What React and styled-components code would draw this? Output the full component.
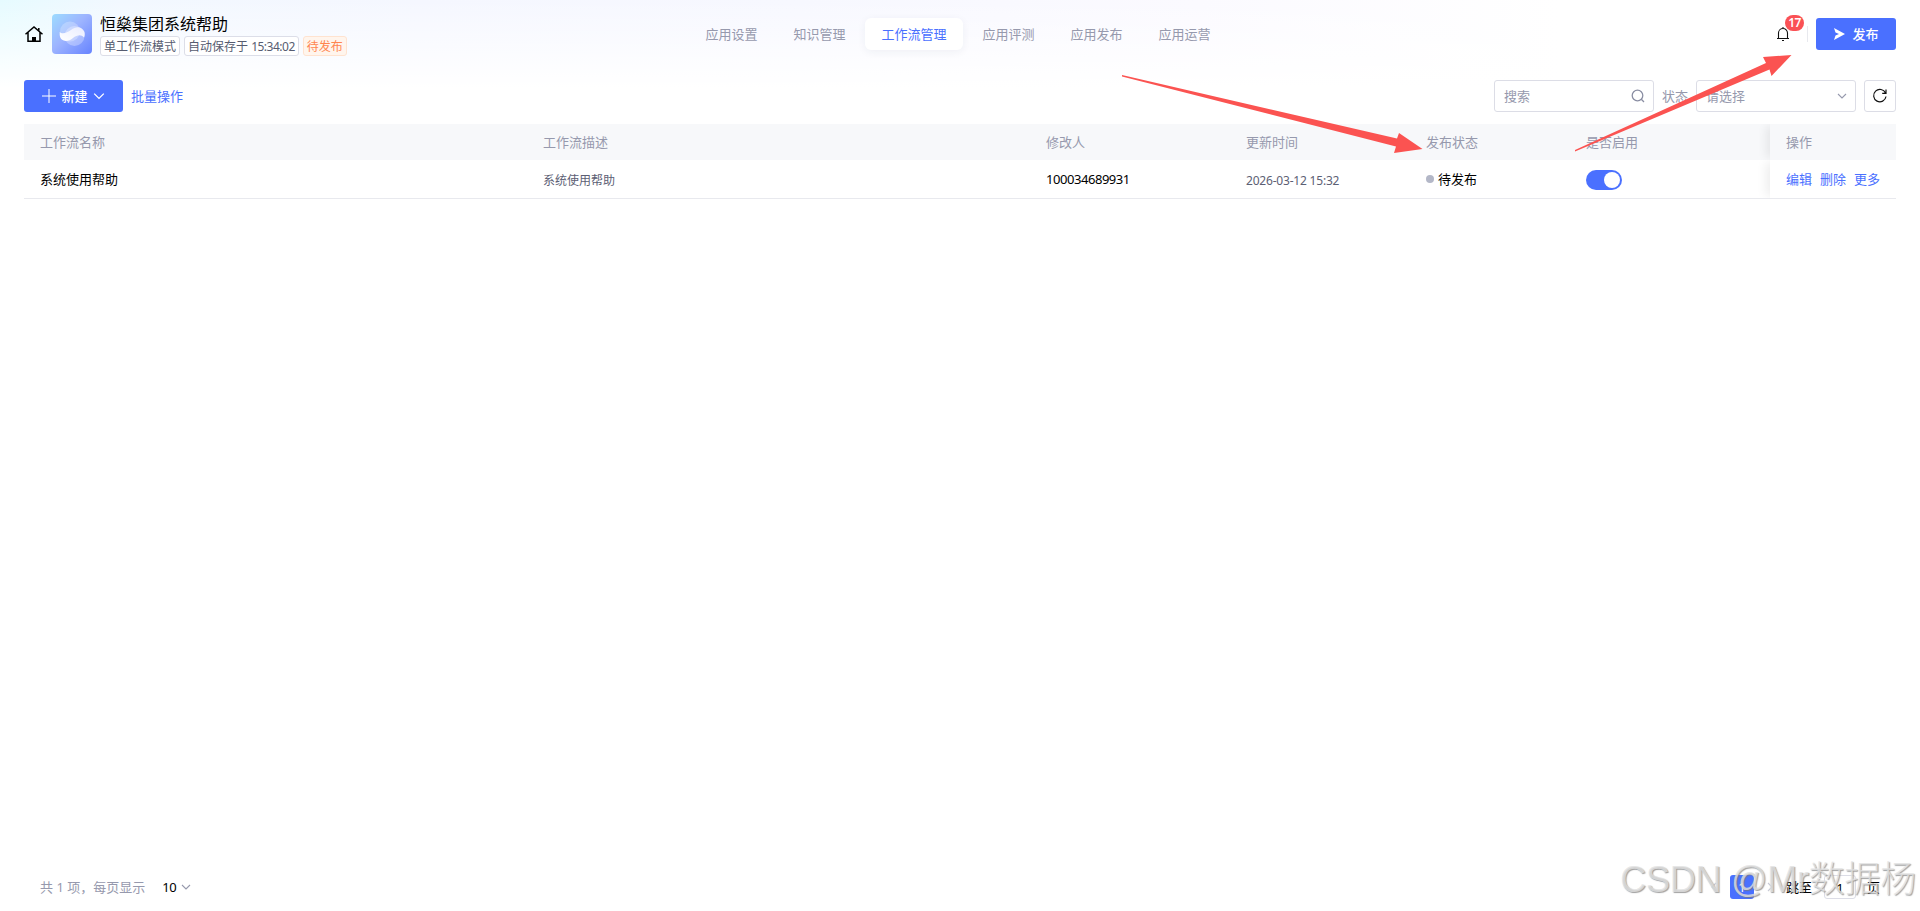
import React, {useState} from 'react';
import styled, {createGlobalStyle} from 'styled-components';

const GlobalStyle = createGlobalStyle`
  * {
    box-sizing: border-box;
  }

  body {
    margin: 0;
    overflow: hidden;
    color: #000;
    font-family: "Noto Sans", "Noto Sans CJK SC", sans-serif;
    font-size: 13px;
    line-height: 20px;
  }
`;

const Page = styled.div`
  position: relative;
  display: flex;
  flex-direction: column;
  height: 911px;
  padding: 0 24px;
  background:
    linear-gradient(180deg, rgba(255, 255, 255, 0) 0, #fff 88px),
    linear-gradient(90deg, #e6fbff 0, #f2f8ff 120px, #f5f7ff 420px, #f7f8ff 800px, #fbfaff 1200px, #fff 1560px);
`;

const Header = styled.header`
  display: flex;
  align-items: center;
  justify-content: space-between;
  height: 68px;
`;

const Side = styled.div`
  display: flex;
  flex: 1;
  align-items: center;
  justify-content: ${props => props.end ? 'flex-end' : 'flex-start'};
`;

const HomeIcon = styled.svg`
  width: 20px;
  height: 18px;
  margin-right: 8px;
`;

const Logo = styled.svg`
  width: 40px;
  height: 40px;
`;

const AppInfo = styled.div`
  margin-left: 8px;
`;

const AppName = styled.div`
  font-size: 16px;
  line-height: 24px;
`;

const Tags = styled.div`
  display: flex;
  gap: 4px;
`;

const Tag = styled.span`
  height: 20px;
  padding: 0 3px;
  border: 1px solid ${props => props.warn ? '#ffe3d0' : '#dcdee8'};
  border-radius: 3px;
  background: ${props => props.warn ? '#fff5ed' : '#fff'};
  color: ${props => props.warn ? '#ff8550' : '#565c70'};
  font-size: 12px;
  line-height: 20px;
  white-space: nowrap;
`;

const Num = styled.span`
  letter-spacing: ${props => props.tight || '-0.45px'};
`;

const Nav = styled.nav`
  display: flex;
  gap: 4px;
  margin-right: 4px;
`;

const NavItem = styled.a`
  height: 32px;
  padding: 0 16px;
  border-radius: 6px;
  line-height: 32px;
  color: ${props => props.active ? '#4a70ff' : '#9699ad'};
  background: ${props => props.active ? '#fff' : 'transparent'};
  box-shadow: ${props => props.active ? '0 2px 8px rgba(40, 50, 90, 0.06)' : 'none'};
  cursor: pointer;
`;

const Bell = styled.div`
  position: relative;
  display: flex;
  width: 16px;
  height: 16px;
  margin-right: 16px;
`;

const Badge = styled.span`
  position: absolute;
  left: 10px;
  top: -11px;
  width: 19px;
  height: 16px;
  border-radius: 8px;
  background: #fa5155;
  color: #fff;
  font-size: 12px;
  font-weight: 600;
  line-height: 16px;
  letter-spacing: -0.5px;
  text-align: center;
`;

const Divider = styled.span`
  width: 1px;
  height: 16px;
  margin-right: 8px;
  background: #e8e9ee;
`;

const Button = styled.button`
  display: flex;
  align-items: center;
  justify-content: center;
  gap: ${props => props.gap || 6}px;
  width: ${props => props.width}px;
  height: 32px;
  padding: 0;
  border: none;
  border-radius: 3px;
  background: #4a70ff;
  color: #fff;
  font: inherit;
  font-weight: 500;
  cursor: pointer;
`;

const Toolbar = styled.div`
  display: flex;
  align-items: center;
  height: 32px;
  margin-top: 12px;
`;

const Link = styled.a`
  color: #4a70ff;
  cursor: pointer;
`;

const BatchLink = styled(Link)`
  margin-left: 8px;
`;

const Filters = styled.div`
  display: flex;
  align-items: center;
  gap: 8px;
  margin-left: auto;
  color: #9699ad;
`;

const Field = styled.div`
  display: flex;
  align-items: center;
  justify-content: ${props => props.square ? 'center' : 'space-between'};
  width: ${props => props.square ? 32 : 160}px;
  height: 32px;
  padding: ${props => props.square ? 0 : '0 8px 0 9px'};
  border: 1px solid #dcdde6;
  border-radius: 3px;
  background: #fff;
`;

const Row = styled.div`
  display: grid;
  grid-template-columns: 1fr 1fr 200px 180px 160px 200px 126px;
`;

const HeadRow = styled(Row)`
  height: 36px;
  margin-top: 12px;
  background: #f7f8fa;
  color: #9699ad;
`;

const BodyRow = styled(Row)`
  height: 39px;
  border-bottom: 1px solid #e8e9ee;
`;

const Cell = styled.div`
  display: flex;
  align-items: center;
  padding: ${props => props.muted ? '3px 16px 0' : '0 16px'};
  color: ${props => props.muted ? '#5c6074' : 'inherit'};
  font-size: ${props => props.muted ? 12 : 13}px;
`;

const FixedCell = styled(Cell)`
  gap: 8px;
  background: ${props => props.head ? '#f7f8fa' : '#fff'};
  box-shadow: -6px 0 10px -2px rgba(0, 0, 0, 0.07);
  clip-path: inset(0 0 0 -16px);
`;

const Dot = styled.span`
  width: 8px;
  height: 8px;
  margin-right: 4px;
  border-radius: 50%;
  background: #b3b7c7;
`;

const Toggle = styled.button`
  display: flex;
  align-items: center;
  justify-content: ${props => props.on ? 'flex-end' : 'flex-start'};
  width: 36px;
  height: 20px;
  margin-top: 2px;
  padding: 0 2px;
  border: none;
  border-radius: 10px;
  background: ${props => props.on ? '#4a70ff' : '#b3b7c7'};

  &::after {
    content: '';
    width: 16px;
    height: 16px;
    border-radius: 50%;
    background: #fff;
  }
`;

const Footer = styled.footer`
  display: flex;
  align-items: center;
  height: 24px;
  margin-top: auto;
  margin-bottom: 12px;
  padding: 0 16px;
`;

const Total = styled.span`
  color: #9699ad;
`;

const PageSize = styled.span`
  display: flex;
  align-items: center;
  gap: 5px;
  margin-left: 17px;
`;

const Pager = styled.div`
  display: flex;
  align-items: center;
  margin-left: auto;
`;

const PageButton = styled.span`
  width: 24px;
  height: 24px;
  margin: 0 11px;
  border-radius: 3px;
  background: #4a70ff;
  color: #fff;
  line-height: 24px;
  text-align: center;
`;

const JumpLabel = styled.span`
  margin-left: 11px;
`;

const PageInput = styled.span`
  width: 32px;
  height: 24px;
  margin: 0 11px 0 12px;
  border: 1px solid #dcdde6;
  border-radius: 3px;
  line-height: 24px;
  text-align: center;
`;

const Arrows = styled.svg`
  position: absolute;
  left: 0;
  top: 0;
  width: 1920px;
  height: 200px;
  pointer-events: none;
`;

const Watermark = styled.div`
  position: absolute;
  right: 4px;
  bottom: 7px;
  color: rgba(226, 226, 226, 0.8);
  font-family: "Liberation Sans", "Noto Sans CJK SC", sans-serif;
  font-size: 36px;
  font-weight: 300;
  line-height: 48px;
  letter-spacing: -0.25px;
  text-shadow: 1px 1px 1px rgba(120, 120, 120, 0.7);
  white-space: nowrap;
  pointer-events: none;
`;

const Chevron = ({color = '#9699ad', size = 10, side}) => (
    <svg width={size} height={size} viewBox="0 0 10 10" fill="none" stroke={color} strokeWidth="1.1">
        <path d={side === 'left' ? 'M7 1L3 5l4 4' : side === 'right' ? 'M3 1l4 4-4 4' : 'M1 3l4 4 4-4'}/>
    </svg>
);

const NAV = ['应用设置', '知识管理', '工作流管理', '应用评测', '应用发布', '应用运营'];
const COLUMNS = ['工作流名称', '工作流描述', '修改人', '更新时间', '发布状态', '是否启用'];

const App = () => {
    const [tab, setTab] = useState('工作流管理');
    const [enabled, setEnabled] = useState(true);

    return (
        <Page>
            <GlobalStyle/>
            <Header>
                <Side>
                    <HomeIcon viewBox="0 0 20 18" fill="none" stroke="#000" strokeWidth="1.5">
                        <path d="M1.5 9.3L10 2l8.5 7.3M4 7.5v8.7h12V7.5M14.8 3v3"/>
                        <path d="M8 12h4v4H8z" fill="#000" stroke="none"/>
                    </HomeIcon>
                    <Logo viewBox="0 0 40 40">
                        <defs>
                            <linearGradient id="logoBg" x1="0" y1="0" x2="1" y2="1">
                                <stop offset="0" stopColor="#9ddcff"/>
                                <stop offset="0.45" stopColor="#9db4ff"/>
                                <stop offset="1" stopColor="#6683ff"/>
                            </linearGradient>
                            <linearGradient id="logoMark" x1="0" y1="1" x2="1" y2="0">
                                <stop offset="0" stopColor="#fff"/>
                                <stop offset="1" stopColor="#e9ecff"/>
                            </linearGradient>
                        </defs>
                        <rect width="40" height="40" rx="4" fill="url(#logoBg)"/>
                        <circle cx="18" cy="17.5" r="10" fill="#fff" opacity="0.25"/>
                        <circle cx="22.5" cy="22" r="10" fill="#fff" opacity="0.3"/>
                        <path d="M7.700 18C10 20.500 15 19 19 16C24 12 30 12 32.500 18C33 20 32.800 22 32 23.500C29 20 25 21 21 24C16 28.500 8.500 28 7.700 21z" fill="url(#logoMark)"/>
                    </Logo>
                    <AppInfo>
                        <AppName>恒燊集团系统帮助</AppName>
                        <Tags>
                            <Tag>单工作流模式</Tag>
                            <Tag>自动保存于 <Num tight="-0.5px">15:34:02</Num></Tag>
                            <Tag warn="true">待发布</Tag>
                        </Tags>
                    </AppInfo>
                </Side>
                <Nav>
                    {NAV.map(name => (
                        <NavItem key={name} active={name === tab ? 'true' : undefined} onClick={() => setTab(name)}>{name}</NavItem>
                    ))}
                </Nav>
                <Side end="true">
                    <Bell>
                        <svg width="16" height="16" viewBox="0 0 16 16" fill="none" stroke="#111" strokeWidth="1.1">
                            <path d="M2 12.500h12M3.500 12.500V7a4.500 4.500 0 0 1 9 0v5.500M8 1v1.500M7 14.500h2"/>
                        </svg>
                        <Badge>17</Badge>
                    </Bell>
                    <Divider/>
                    <Button width={80} gap={7}>
                        <svg width="12" height="12" viewBox="0 0 12 12">
                            <path d="M1 0l11 6-11 6 1.500-4.500L6 6 2.500 4.500z" fill="#fff"/>
                        </svg>
                        <span>发布</span>
                    </Button>
                </Side>
            </Header>

            <Toolbar>
                <Button width={99} gap={5}>
                    <svg width="14" height="14" viewBox="0 0 14 14" stroke="#fff">
                        <path d="M7 0v14M0 7h14"/>
                    </svg>
                    <span>新建</span>
                    <Chevron color="#fff" size={12}/>
                </Button>
                <BatchLink>批量操作</BatchLink>
                <Filters>
                    <Field>
                        <span>搜索</span>
                        <svg width="14" height="14" viewBox="0 0 14 14" fill="none" stroke="#8a8ea3" strokeWidth="1.3">
                            <circle cx="6.5" cy="6.5" r="5.3"/>
                            <path d="M10.3 10.3l2.700 2.700"/>
                        </svg>
                    </Field>
                    <span>状态</span>
                    <Field>
                        <span>请选择</span>
                        <Chevron/>
                    </Field>
                    <Field square="true">
                        <svg width="16" height="16" viewBox="0 0 16 16" fill="none" stroke="#111" strokeWidth="1.2">
                            <path d="M14 8.500A6.200 6.200 0 1 1 13.500 5M14 1.500V5.300h-3.800"/>
                        </svg>
                    </Field>
                </Filters>
            </Toolbar>

            <HeadRow>
                {COLUMNS.map(name => <Cell key={name}>{name}</Cell>)}
                <FixedCell head="true">操作</FixedCell>
            </HeadRow>
            <BodyRow>
                <Cell>系统使用帮助</Cell>
                <Cell muted="true">系统使用帮助</Cell>
                <Cell><Num>100034689931</Num></Cell>
                <Cell muted="true"><Num tight="-0.2px">2026-03-12 15:32</Num></Cell>
                <Cell><Dot/>待发布</Cell>
                <Cell><Toggle on={enabled ? 'true' : undefined} onClick={() => setEnabled(!enabled)}/></Cell>
                <FixedCell>
                    <Link>编辑</Link>
                    <Link>删除</Link>
                    <Link>更多</Link>
                </FixedCell>
            </BodyRow>

            <Footer>
                <Total>共 1 项，每页显示</Total>
                <PageSize><Num>10</Num><Chevron/></PageSize>
                <Pager>
                    <Chevron side="left" color="#c8cad5"/>
                    <PageButton>1</PageButton>
                    <Chevron side="right" color="#c8cad5"/>
                    <JumpLabel>跳至</JumpLabel>
                    <PageInput>1</PageInput>
                    <span>页</span>
                </Pager>
            </Footer>

            <Arrows viewBox="0 0 1920 200" fill="#fb5351">
                <path d="M1122 75L1397 138.500 1399 133 1422.500 149 1394 153 1396 146.500 1122 76.500z"/>
                <path d="M1575 150L1766 63 1763 57 1791.500 55 1771.500 76 1769.500 69.500 1575 151.500z"/>
            </Arrows>
            <Watermark>CSDN @Mr数据杨</Watermark>
        </Page>
    );
};

export default App;
